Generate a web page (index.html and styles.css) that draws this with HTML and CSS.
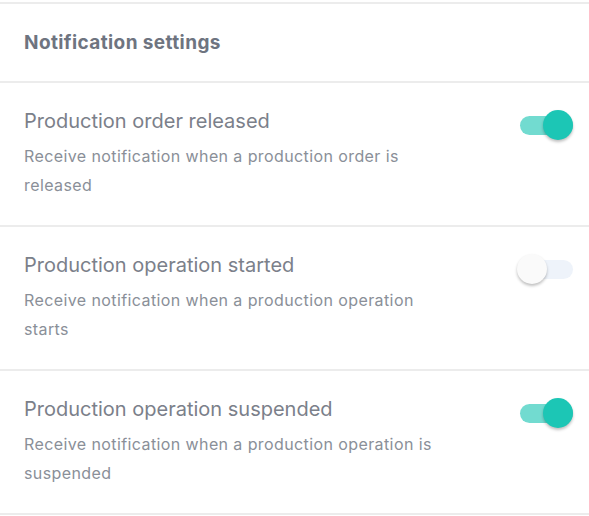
FILE: index.html
```html
<!DOCTYPE html>
<html lang="en">
<head>
    <meta charset="UTF-8">
    <meta name="viewport" content="width=device-width, initial-scale=1.0">
    <title>Notification settings</title>
    <link rel="stylesheet" href="styles.css">
</head>
<body>

<div id="settings">
    <div class="settings-header">Notification settings</div>

    <div class="setting-row">
        <div class="setting-text">
            <div class="setting-title">Production order released</div>
            <div class="setting-desc">Receive notification when a production order is released</div>
        </div>
        <button class="toggle on" onclick="toggleSwitch(this)"><span class="knob"></span></button>
    </div>

    <div class="setting-row">
        <div class="setting-text">
            <div class="setting-title">Production operation started</div>
            <div class="setting-desc">Receive notification when a production operation starts</div>
        </div>
        <button class="toggle" onclick="toggleSwitch(this)"><span class="knob"></span></button>
    </div>

    <div class="setting-row">
        <div class="setting-text">
            <div class="setting-title">Production operation suspended</div>
            <div class="setting-desc">Receive notification when a production operation is suspended</div>
        </div>
        <button class="toggle on" onclick="toggleSwitch(this)"><span class="knob"></span></button>
    </div>
</div>

<script>
    function toggleSwitch(el) {
        el.classList.toggle('on');
    }
</script>

</body>
</html>
```

FILE: styles.css
```css
body {
    margin: 0;
    background-color: #fff;
    font-family: 'Inter', 'Noto Sans', sans-serif;
}

#settings {
    margin-top: 2px;
    border-top: 2px solid #ececec;
}

.settings-header {
    height: 77px;
    padding: 0 24px;
    display: flex;
    align-items: center;
    font-size: 19px;
    font-weight: 700;
    letter-spacing: 0.4px;
    color: #6e7480;
    border-bottom: 2px solid #ececec;
}

.setting-row {
    display: flex;
    justify-content: space-between;
    align-items: flex-start;
    padding: 24px 15px 0 24px;
    height: 118px;
    border-bottom: 2px solid #ececec;
}

.setting-text {
    width: 436px;
}

.setting-title {
    font-size: 20px;
    line-height: 28px;
    color: #7b808a;
}

.setting-desc {
    margin-top: 7px;
    font-size: 16px;
    line-height: 29px;
    letter-spacing: 0.4px;
    color: #8a8f98;
}

.toggle {
    position: relative;
    width: 57px;
    height: 31px;
    margin-top: 3px;
    padding: 0;
    border: none;
    background: none;
    cursor: pointer;
}

.toggle::before {
    content: '';
    position: absolute;
    left: 3px;
    top: 6px;
    width: 53px;
    height: 19px;
    border-radius: 10px;
    background-color: #eef3fa;
    transition: background-color 0.3s;
}

.toggle .knob {
    position: absolute;
    left: 0;
    top: 0;
    width: 30px;
    height: 30px;
    border-radius: 50%;
    background-color: #fafafa;
    box-shadow: 0 2px 3px rgba(0, 0, 0, 0.25);
    transition: left 0.3s, background-color 0.3s;
}

.toggle.on::before {
    background-color: #72dbd0;
}

.toggle.on .knob {
    left: 26px;
    background-color: #1cc6b5;
}
```
